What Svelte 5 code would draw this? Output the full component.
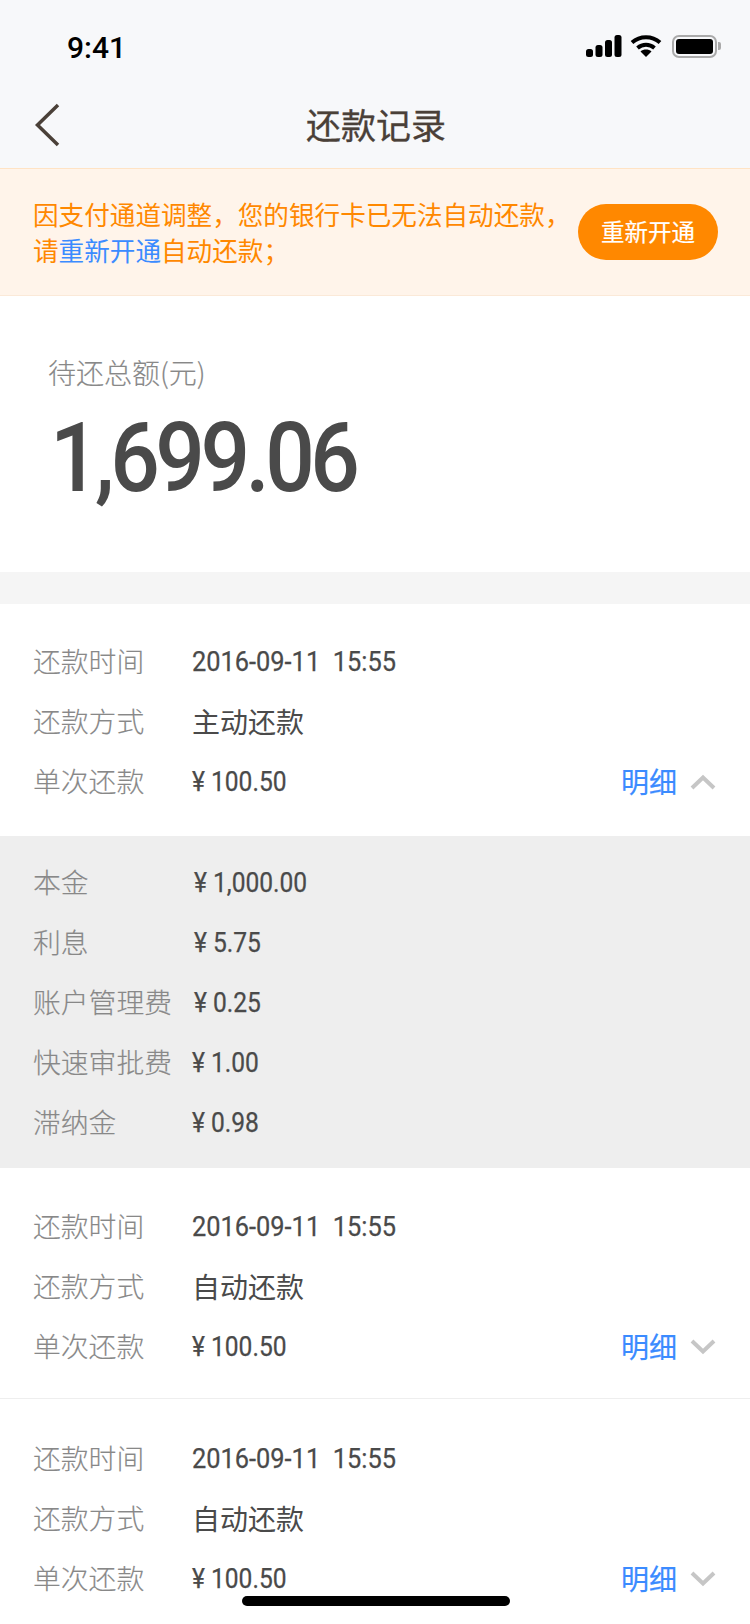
<script>
  const details = [
    ['本金', '1,000.00', true],
    ['利息', '5.75', true],
    ['账户管理费', '0.25', true],
    ['快速审批费', '1.00', false],
    ['滞纳金', '0.98', false]
  ];
  const records = [
    { method: '主动还款', open: true },
    { method: '自动还款', open: false },
    { method: '自动还款', open: false }
  ];
</script>

<div class="page">
  <header class="top">
    <div class="status">
      <span class="time">9:41</span>
      <div class="status-icons">
        <svg width="36" height="22" viewBox="0 0 36 22"><rect x="0" y="14" width="7" height="8" rx="2.5"/><rect x="9.500" y="10" width="7" height="12" rx="2.500"/><rect x="19" y="5" width="7" height="17" rx="2.500"/><rect x="28.500" y="0" width="7" height="22" rx="2.500"/></svg>
        <svg width="32" height="24" viewBox="0 0 32 24" fill="none" stroke="#000" stroke-width="4"><path d="M2 8.500C10 1.500 22 1.500 30 8.500"/><path d="M7.500 14C12.500 9.800 19.500 9.800 24.500 14"/><path d="M16 23l-5.500-5.500c3-2.600 8-2.600 11 0z" fill="#000" stroke="none"/></svg>
        <div class="battery"><div class="charge"></div></div>
        <div class="cap"></div>
      </div>
    </div>
    <nav class="nav">
      <svg class="back" width="26" height="44" viewBox="0 0 26 44" fill="none"><path d="M24 2L3.500 22 24 42" stroke="#4a4038" stroke-width="3.500"/></svg>
      <h1>还款记录</h1>
    </nav>
  </header>

  <section class="notice">
    <p>因支付通道调整，您的银行卡已无法自动还款，<br />请<span class="link">重新开通</span>自动还款；</p>
    <button>重新开通</button>
  </section>

  <section class="total">
    <div class="total-label">待还总额(元)</div>
    <div class="amount"><span>1,699.06</span></div>
  </section>

  {#each records as r, i}
    <section class="card" class:first={i === 0} class:second={i === 1} class:third={i === 2}>
      <div class="row"><span class="label">还款时间</span><span class="num">2016-09-11&nbsp;&nbsp;15:55</span></div>
      <div class="row"><span class="label">还款方式</span><span class="val">{r.method}</span></div>
      <div class="row">
        <span class="label">单次还款</span><span class="num money">¥ 100.50</span>
        <span class="more">明细
          <svg width="26" height="16" viewBox="0 0 26 16" fill="none"><path d={r.open ? 'M2 14L13 3.500 24 14' : 'M2 2l11 10.500L24 2'} stroke="#c6c6c6" stroke-width="4"/></svg>
        </span>
      </div>
    </section>
    {#if r.open}
      <section class="detail">
        {#each details as d}
          <div class="row"><span class="label">{d[0]}</span><span class="num money" class:nudge={d[2]}>¥ {d[1]}</span></div>
        {/each}
      </section>
    {/if}
  {/each}

  <div class="home"></div>
</div>

<style>
  :global(body) { margin: 0; background: #fff; }
  .page {
    position: relative;
    width: 750px;
    height: 1624px;
    overflow: hidden;
    background: #fff;
    font-family: "Noto Sans CJK SC", sans-serif;
  }
  .top { background: #f7f8fa; height: 168px; }
  .status { height: 84px; display: flex; align-items: center; justify-content: space-between; padding: 12px 29px 0 67px; box-sizing: border-box; }
  .time { font: 500 30px/1 Roboto, sans-serif; color: #000; }
  .status-icons { display: flex; align-items: center; margin-top: -4px; }
  .status-icons svg:first-child { margin-right: 8px; }
  .status-icons svg:nth-child(2) { margin-right: 10px; }
  .battery { width: 45px; height: 23px; box-sizing: border-box; border: 2px solid #aaa; border-radius: 7px; padding: 2px; }
  .charge { width: 100%; height: 100%; background: #000; border-radius: 3px; }
  .cap { width: 3px; height: 8px; background: #aaa; border-radius: 0 2px 2px 0; margin-left: 1px; }
  .nav { position: relative; height: 84px; display: flex; align-items: center; justify-content: center; }
  .back { position: absolute; left: 34px; top: 19px; }
  h1 { margin: 0 0 6px 2px; font-size: 35px; font-weight: 400; color: #4a4038; line-height: 1; -webkit-text-stroke: 0.3px #4a4038; }
  .notice {
    height: 128px; box-sizing: border-box;
    background: #fff4ea;
    border-top: 1px solid #ffe3c4;
    border-bottom: 1px solid #fbe9d8;
    display: flex; align-items: center; justify-content: space-between;
    padding: 0 32px 0 33px;
  }
  .notice p { margin: 0; font-size: 25.600px; line-height: 36px; color: #ff8800; white-space: nowrap; font-weight: 400; }
  .link { color: #3b8bff; }
  button {
    width: 140px; height: 56px; border: 0; border-radius: 28px; padding: 0;
    background: #ff8800; color: #fff;
    font: 400 23.500px/1 "Noto Sans CJK SC", sans-serif;
    -webkit-text-stroke: 0.2px #fff;
  }
  .total { height: 276px; box-sizing: border-box; padding-top: 59px; padding-left: 48px; }
  .total-label { font-size: 28px; line-height: 34px; color: #888; font-weight: 300; white-space: nowrap; -webkit-text-stroke: 0.15px #888; }
  .amount { margin-top: 14px; font: 500 97px/110px Roboto, sans-serif; color: #4a4a4a; height: 110px; letter-spacing: -5px; }
  .amount span { display: inline-block; transform: scaleX(0.9); transform-origin: 0 0; white-space: nowrap; margin-left: 2px; }
  .card.first { border-top: 32px solid #f5f5f5; padding: 28px 0 24px; }
  .card.second { padding: 29px 0 21px; border-bottom: 1px solid #eee; }
  .card.third { padding: 30px 0 0; }
  .detail { background: #eee; height: 332px; box-sizing: border-box; padding-top: 17px; }
  .row { height: 60px; padding: 0 34px 0 33px; display: flex; align-items: center; position: relative; }
  .label { width: 159px; flex: none; color: #888; font-weight: 300; white-space: nowrap; font-size: 27.800px; margin-bottom: 4px; -webkit-text-stroke: 0.15px #888; }
  .val { color: #4a4a4a; font-size: 28px; margin-bottom: 2px; }
  .num { display: inline-block; font: 400 27px/1 Roboto, sans-serif; color: #4a4a4a; transform: scaleX(0.94); transform-origin: 0 50%; white-space: nowrap; -webkit-text-stroke: 0.25px #4a4a4a; }
  .money { transform: scaleX(0.91); }
  .nudge { margin-left: 2px; }
  .more { margin-left: auto; display: flex; align-items: center; gap: 13px; color: #3b8bff; font-size: 28px; margin-bottom: 2px; -webkit-text-stroke: 0.2px #3b8bff; }
  .more svg { margin-top: 2px; }
  .home { position: absolute; left: 242px; top: 1596px; width: 268px; height: 10px; border-radius: 5px; background: #000; }
</style>
